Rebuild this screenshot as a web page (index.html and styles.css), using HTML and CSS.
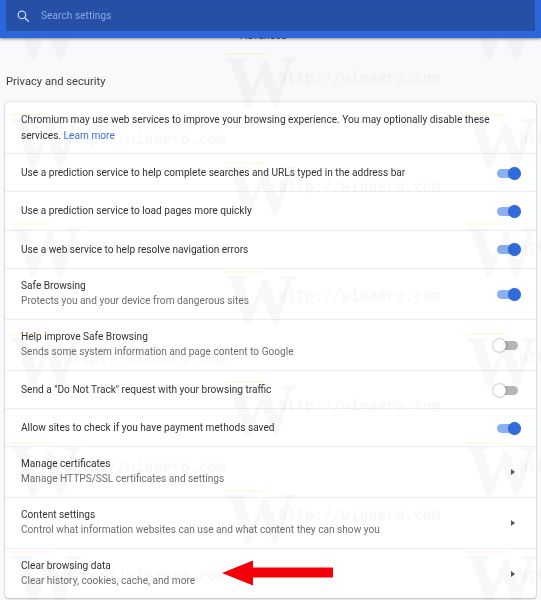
FILE: index.html
```html
<!DOCTYPE html>
<html lang="en">
<head>
<meta charset="utf-8">
<title>Settings</title>
<link rel="stylesheet" href="styles.css">
</head>
<body>
<div class="page">
  <main class="content">
    <div class="advanced">Advanced</div>
    <h2 class="section-title">Privacy and security</h2>
    <section class="card">
      <div class="row row-tall row-intro">
        <p class="intro">Chromium may use web services to improve your browsing experience. You may optionally disable these services. <a class="link" href="#">Learn more</a></p>
      </div>
      <div class="row"><span class="title">Use a prediction service to help complete searches and URLs typed in the address bar</span><span class="toggle on"></span></div>
      <div class="row"><span class="title">Use a prediction service to load pages more quickly</span><span class="toggle on"></span></div>
      <div class="row"><span class="title">Use a web service to help resolve navigation errors</span><span class="toggle on"></span></div>
      <div class="row row-tall"><div class="text"><span class="title">Safe Browsing</span><span class="sub">Protects you and your device from dangerous sites</span></div><span class="toggle on"></span></div>
      <div class="row row-tall"><div class="text"><span class="title">Help improve Safe Browsing</span><span class="sub">Sends some system information and page content to Google</span></div><span class="toggle"></span></div>
      <div class="row"><span class="title">Send a "Do Not Track" request with your browsing traffic</span><span class="toggle"></span></div>
      <div class="row"><span class="title">Allow sites to check if you have payment methods saved</span><span class="toggle on"></span></div>
      <div class="row row-tall"><div class="text"><span class="title">Manage certificates</span><span class="sub">Manage HTTPS/SSL certificates and settings</span></div><span class="chevron"></span></div>
      <div class="row row-tall"><div class="text"><span class="title">Content settings</span><span class="sub">Control what information websites can use and what content they can show you</span></div><span class="chevron"></span></div>
      <div class="row row-tall"><div class="text"><span class="title">Clear browsing data</span><span class="sub">Clear history, cookies, cache, and more</span></div><span class="chevron"></span></div>
    </section>
  </main>

  <div class="watermarks" aria-hidden="true">
    <div class="wm-col wm-col-a">
      <div class="wm"><span class="wm-w">W</span><span class="wm-url">http://winaero.com</span></div>
      <div class="wm"><span class="wm-w">W</span><span class="wm-url">http://winaero.com</span></div>
      <div class="wm"><span class="wm-w">W</span><span class="wm-url">http://winaero.com</span></div>
      <div class="wm"><span class="wm-w">W</span><span class="wm-url">http://winaero.com</span></div>
      <div class="wm"><span class="wm-w">W</span><span class="wm-url">http://winaero.com</span></div>
      <div class="wm"><span class="wm-w">W</span><span class="wm-url">http://winaero.com</span></div>
    </div>
    <div class="wm-col wm-col-b">
      <div class="wm"><span class="wm-w">W</span><span class="wm-url">http://winaero.com</span></div>
      <div class="wm"><span class="wm-w">W</span><span class="wm-url">http://winaero.com</span></div>
      <div class="wm"><span class="wm-w">W</span><span class="wm-url">http://winaero.com</span></div>
      <div class="wm"><span class="wm-w">W</span><span class="wm-url">http://winaero.com</span></div>
      <div class="wm"><span class="wm-w">W</span><span class="wm-url">http://winaero.com</span></div>
    </div>
    <div class="wm-col wm-col-c">
      <div class="wm"><span class="wm-w">W</span><span class="wm-url">http://winaero.com</span></div>
      <div class="wm"><span class="wm-w">W</span><span class="wm-url">http://winaero.com</span></div>
      <div class="wm"><span class="wm-w">W</span><span class="wm-url">http://winaero.com</span></div>
      <div class="wm"><span class="wm-w">W</span><span class="wm-url">http://winaero.com</span></div>
      <div class="wm"><span class="wm-w">W</span><span class="wm-url">http://winaero.com</span></div>
      <div class="wm"><span class="wm-w">W</span><span class="wm-url">http://winaero.com</span></div>
    </div>
  </div>

  <header class="toolbar">
    <div class="search">
      <svg class="search-icon" viewBox="0 0 24 24" width="15" height="15"><circle cx="9.5" cy="9.5" r="6" fill="none" stroke="currentColor" stroke-width="2"/><path d="M14 14l6.5 6.5" fill="none" stroke="currentColor" stroke-width="2.2"/></svg>
      <span class="search-text">Search settings</span>
    </div>
  </header>

  <svg class="arrow" viewBox="0 0 112 28" width="112" height="28"><path d="M0 13 L31 0.5 L31 7.5 L111 7.5 L111 17.5 L31 17.5 L31 25.5 Z" fill="#f40009"/></svg>
</div>
</body>
</html>
```
FILE: styles.css
```css
* { box-sizing: border-box; }
html, body { margin: 0; padding: 0; }
body {
  background: #f8f9fa;
  font-family: Roboto, "Liberation Sans", sans-serif;
  overflow: hidden;
}
.page {
  position: relative;
  width: 541px;
  height: 600px;
  overflow: hidden;
  filter: blur(0.35px);
}
.content { padding: 29px 5px 0; }
.advanced {
  text-align: center;
  font-size: 10.5px;
  line-height: 14px;
  color: #3c4043;
  padding-right: 14px;
}
.section-title {
  margin: 30px 0 0 1px;
  font-size: 11.2px;
  line-height: 18px;
  font-weight: 400;
  color: #3c4043;
}
.card {
  margin-top: 11px;
  height: 496px;
  background: #fff;
  border-radius: 4px;
  box-shadow: 0 0 2px rgba(60, 64, 67, .3), 0 1px 2px rgba(60, 64, 67, .25);
}
.row {
  display: flex;
  align-items: center;
  justify-content: space-between;
  height: 38.3px;
  padding: 0 15px 0 16px;
  border-top: 1px solid #eceef0;
  font-size: 10.15px;
  line-height: 15px;
  color: #303336;
}
.row-tall { height: 51px; }
.row-intro { border-top: 0; }
.intro { margin: 0; width: 480px; line-height: 15.5px; }
.link { color: #3f74d8; text-decoration: none; }
.text { display: flex; flex-direction: column; padding-bottom: 2px; }
.sub { color: #6b6f73; }
.toggle {
  position: relative;
  flex: none;
  width: 21px;
  height: 9px;
  margin: 1px 3px 0 0;
  border-radius: 5px;
  background: #b4b6b8;
}
.toggle::after {
  content: "";
  position: absolute;
  left: -4px;
  top: -2px;
  width: 13px;
  height: 13px;
  border-radius: 50%;
  background: #fff;
  box-shadow: 0 0 2px rgba(0, 0, 0, .55);
}
.toggle.on { background: #8ab0f0; }
.toggle.on::after {
  left: 11px;
  background: #2f6bdc;
  box-shadow: 0 0 1px rgba(0, 0, 0, .3);
}
.chevron {
  flex: none;
  width: 0;
  height: 0;
  margin-right: 6px;
  border-left: 4px solid #55595d;
  border-top: 3.5px solid transparent;
  border-bottom: 3.5px solid transparent;
}
.toolbar {
  position: absolute;
  left: 0;
  top: 0;
  width: 541px;
  height: 38px;
  padding: 0 6px;
  background: #2b67da;
  box-shadow: 0 1px 3px rgba(0, 0, 0, .45);
  z-index: 2;
}
.search {
  display: flex;
  align-items: center;
  height: 31px;
  padding-left: 10px;
  background: #274fa5;
  color: #a8c4f5;
}
.search-icon { flex: none; color: #c2d6fa; margin-top: 1px; }
.search-text {
  margin-left: 10px;
  font-size: 10px;
  letter-spacing: 0.1px;
  color: #86a8ea;
}
.watermarks {
  position: absolute;
  inset: 0;
  display: flex;
  pointer-events: none;
  z-index: 1;
}
.wm-col { flex: none; display: flex; flex-direction: column; }
.wm-col-a { width: 225px; padding: 0 0 0 10px; margin-top: -25px; }
.wm-col-b { width: 241px; margin-top: 23px; }
.wm-col-c { width: 100px; margin-top: -25px; }
.wm { display: flex; align-items: center; height: 109.3px; flex: none; }
.wm-w {
  position: relative;
  top: 3px;
  width: 53px;
  font-family: "Liberation Serif", serif;
  font-weight: 700;
  font-size: 72px;
  line-height: 60px;
  color: rgba(60, 64, 67, .035);
  flex: none;
}
.wm-w::before {
  content: "";
  position: absolute;
  left: 0;
  top: 2px;
  width: 40px;
  height: 2px;
  background: rgba(255, 215, 90, .14);
}
.wm-url {
  font-family: "DejaVu Sans Mono", monospace;
  font-weight: 700;
  font-size: 15px;
  white-space: nowrap;
  color: rgba(60, 64, 67, .035);
}
.arrow {
  position: absolute;
  left: 222px;
  top: 560px;
  z-index: 3;
}
```
